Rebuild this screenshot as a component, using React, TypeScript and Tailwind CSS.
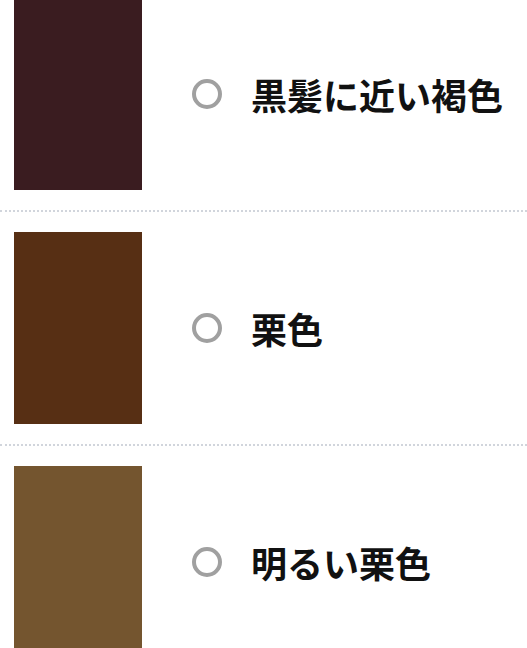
import React from "react";

const items = [
  { label: "黒髪に近い褐色", color: "bg-[#3a1c20]" },
  { label: "栗色", color: "bg-[#572f14]" },
  { label: "明るい栗色", color: "bg-[#74552f]" },
];

export default function App() {
  return (
    <div
      className="w-[527px] h-[648px] overflow-hidden bg-white"
      style={{ fontFamily: '"Noto Sans CJK JP", "Noto Sans", sans-serif' }}
    >
      <div className="-mt-[22px] flex flex-col">
        {items.map((it) => (
          <label
            key={it.label}
            className="flex items-center py-5 border-b-2 border-dotted border-gray-300"
          >
            <div className={`ml-[14px] w-[128px] h-[192px] shrink-0 ${it.color}`} />
            <span className="ml-[50px] w-[30px] h-[30px] rounded-full border-4 border-[#a0a0a0] shrink-0" />
            <span className="ml-[29px] text-[36px] leading-none font-bold text-[#111]">
              {it.label}
            </span>
          </label>
        ))}
      </div>
    </div>
  );
}
